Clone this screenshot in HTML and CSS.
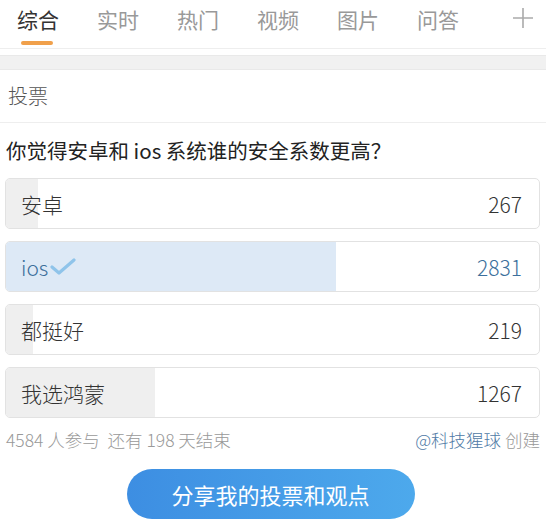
FILE: index.html
```html
<!DOCTYPE html>
<html lang="zh">
<head>
    <meta charset="UTF-8">
    <meta name="viewport" content="width=device-width, initial-scale=1.0">
    <title>投票</title>
    <link rel="stylesheet" href="styles.css">
</head>
<body>
    <!-- Onglets -->
    <nav class="tabs">
        <span class="tab active">综合</span>
        <span class="tab">实时</span>
        <span class="tab">热门</span>
        <span class="tab">视频</span>
        <span class="tab">图片</span>
        <span class="tab">问答</span>
        <svg class="tab-plus" width="22" height="22" viewBox="0 0 22 22">
            <path d="M11 1 V21 M1 11 H21" stroke="#aaa" stroke-width="1.6" fill="none"/>
        </svg>
    </nav>
    <div class="band"></div>

    <!-- Vote -->
    <div class="vote-head">投票</div>
    <div class="vote">
        <h3 class="question">你觉得安卓和 ios 系统谁的安全系数更高？</h3>
        <ul class="options">
            <li class="option">
                <div class="fill" style="width: 6%"></div>
                <span class="label">安卓</span>
                <span class="count">267</span>
            </li>
            <li class="option chosen">
                <div class="fill" style="width: 62%"></div>
                <span class="label">ios
                    <svg class="check" width="26" height="20" viewBox="0 0 26 20">
                        <path d="M2 10 L9 16 L24 3" fill="none" stroke="#8fc4ea" stroke-width="3.2" stroke-linecap="round" stroke-linejoin="round"/>
                    </svg>
                </span>
                <span class="count">2831</span>
            </li>
            <li class="option">
                <div class="fill" style="width: 5%"></div>
                <span class="label">都挺好</span>
                <span class="count">219</span>
            </li>
            <li class="option">
                <div class="fill" style="width: 28%"></div>
                <span class="label">我选鸿蒙</span>
                <span class="count">1267</span>
            </li>
        </ul>
        <div class="meta">
            <span>4584 人参与&nbsp;&nbsp;还有 198 天结束</span>
            <span><a class="author">@科技猩球</a> 创建</span>
        </div>
        <div class="share">
            <button class="share-btn">分享我的投票和观点</button>
        </div>
    </div>
</body>
</html>
```

FILE: styles.css
```css
/* CSS */
body {
    font-family: "Noto Sans CJK SC", "Noto Sans", sans-serif;
    background-color: #fff;
    color: #333;
    margin: 0;
    padding: 0;
}

.tabs {
    display: flex;
    align-items: flex-start;
    height: 48px;
    padding-left: 17px;
    gap: 38px;
    border-bottom: 1px solid #eee;
}

.tab {
    font-size: 21px;
    line-height: 38px;
    color: #999;
    position: relative;
}

.tab.active {
    color: #333;
}

.tab.active::after {
    content: "";
    position: absolute;
    left: 4px;
    right: 6px;
    top: 41px;
    height: 4px;
    border-radius: 2px;
    background-color: #f0a04b;
}

.tab-plus {
    margin-left: auto;
    margin-right: 12px;
    margin-top: 7px;
}

.band {
    height: 13px;
    margin-top: 6px;
    background-color: #f1f1f1;
    border-top: 1px solid #e9e9e9;
    border-bottom: 1px solid #e9e9e9;
}

.vote-head {
    padding: 0 8px;
    height: 52px;
    line-height: 52px;
    font-size: 20px;
    font-weight: 300;
    color: #555;
    border-bottom: 1px solid #eee;
}

.vote {
    padding: 0 6px 0 5px;
}

.question {
    margin: 0;
    padding: 9px 0 0 1px;
    font-size: 20.5px;
    font-weight: normal;
    line-height: 36px;
    color: #222;
}

.options {
    list-style-type: none;
    margin: 10px 0 0;
    padding: 0;
    display: flex;
    flex-direction: column;
    gap: 12px;
}

.option {
    position: relative;
    height: 49px;
    border: 1px solid #e2e2e2;
    border-radius: 5px;
    overflow: hidden;
    display: flex;
    align-items: center;
    justify-content: space-between;
    padding: 0 17px 0 15px;
    font-size: 21px;
    font-weight: 300;
    color: #333;
}

.option .fill {
    position: absolute;
    left: 0;
    top: 0;
    bottom: 0;
    background-color: #efefef;
}

.option .label,
.option .count {
    position: relative;
}

.option .label {
    display: flex;
    align-items: center;
}

.option.chosen .fill {
    background-color: #dde9f6;
}

.option.chosen .label,
.option.chosen .count {
    color: #3c6f9c;
}

.check {
    margin-left: 2px;
}

.meta {
    display: flex;
    justify-content: space-between;
    margin-top: 9px;
    padding-left: 1px;
    font-size: 17.5px;
    font-weight: 300;
    color: #999;
}

.author {
    color: #4f7aa6;
}

.share {
    display: flex;
    justify-content: center;
    margin-top: 17px;
}

.share-btn {
    width: 288px;
    height: 50px;
    margin-left: -4px;
    border: none;
    border-radius: 25px;
    background: linear-gradient(to right, #3d8ee2, #4da9ec);
    color: white;
    font-family: inherit;
    font-size: 22px;
    cursor: pointer;
}
```
